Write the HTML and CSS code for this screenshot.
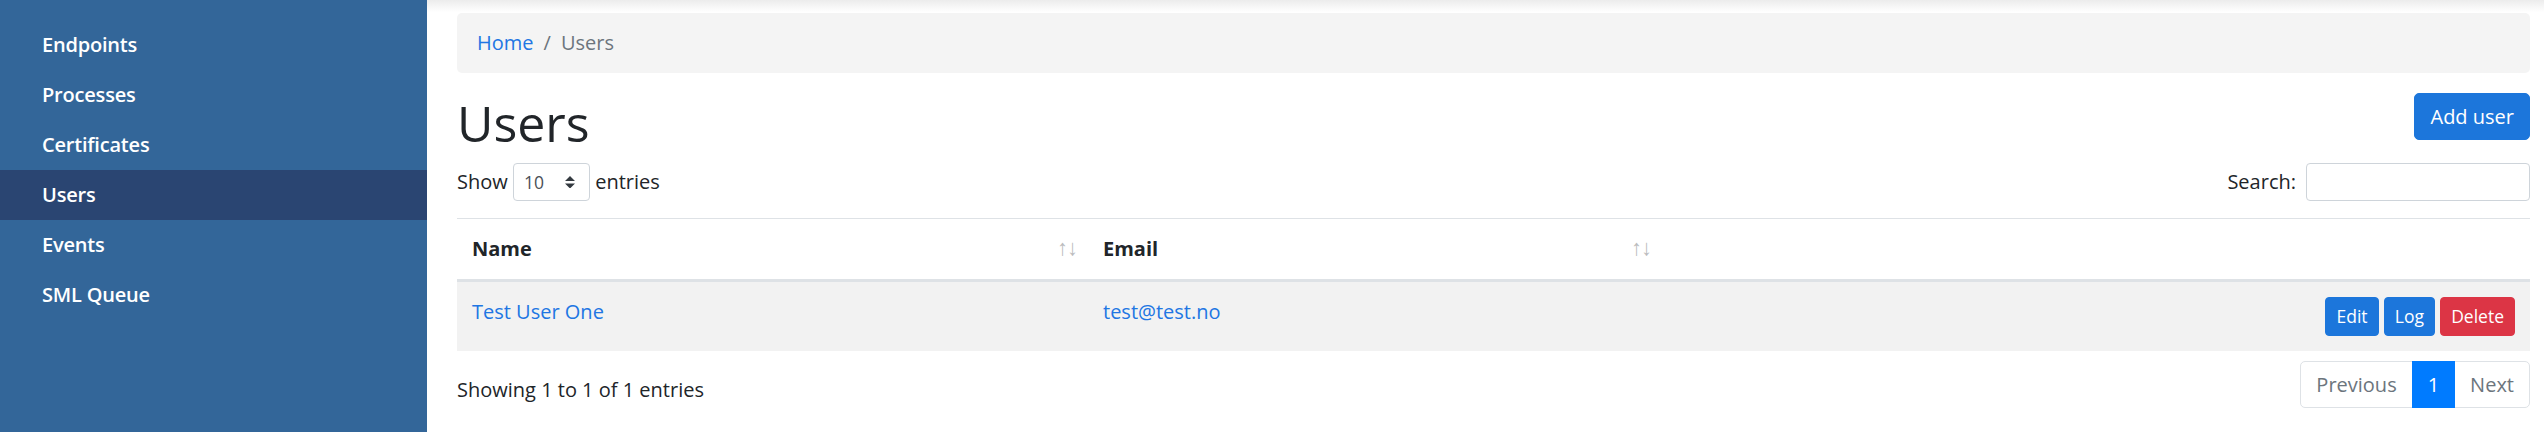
FILE: index.html
```html
<!DOCTYPE html>
<html lang="en">
<head>
<meta charset="utf-8">
<title>Users</title>
<link rel="stylesheet" href="styles.css">
</head>
<body>
<div class="layout">
  <nav class="sidebar">
    <ul class="side-nav">
      <li><a class="side-link" href="#">Endpoints</a></li>
      <li><a class="side-link" href="#">Processes</a></li>
      <li><a class="side-link" href="#">Certificates</a></li>
      <li><a class="side-link active" href="#">Users</a></li>
      <li><a class="side-link" href="#">Events</a></li>
      <li><a class="side-link" href="#">SML Queue</a></li>
    </ul>
  </nav>
  <main class="main">
    <ol class="breadcrumb">
      <li class="crumb"><a href="#">Home</a></li>
      <li class="crumb active">Users</li>
    </ol>
    <div class="page-head">
      <h1 class="title">Users</h1>
      <a class="btn btn-primary" href="#">Add user</a>
    </div>
    <div class="dt-top">
      <div class="dt-length">
        <label class="dt-label">Show <span class="select-wrap"><select class="dt-select"><option>10</option><option>25</option><option>50</option><option>100</option></select><svg class="select-arrows" viewBox="0 0 4 5"><path d="M2 0L0 2h4zm0 5L0 3h4z" fill="#343a40"/></svg></span> entries</label>
      </div>
      <div class="dt-filter">
        <label class="dt-label">Search:<input class="dt-search" type="search"></label>
      </div>
    </div>
    <table class="dt-table">
      <thead>
        <tr>
          <th class="sorting col-name">Name</th>
          <th class="sorting col-email">Email</th>
          <th class="col-actions"></th>
        </tr>
      </thead>
      <tbody>
        <tr class="odd">
          <td><a class="cell-link" href="#">Test User One</a></td>
          <td><a class="cell-link" href="#">test@test.no</a></td>
          <td class="actions"><a class="btn btn-sm btn-primary" href="#">Edit</a> <a class="btn btn-sm btn-primary" href="#">Log</a> <a class="btn btn-sm btn-danger" href="#">Delete</a></td>
        </tr>
      </tbody>
    </table>
    <div class="dt-bottom">
      <div class="dt-info">Showing 1 to 1 of 1 entries</div>
      <ul class="pagination">
        <li class="page-item disabled"><a class="page-link" href="#">Previous</a></li>
        <li class="page-item active"><a class="page-link" href="#">1</a></li>
        <li class="page-item disabled"><a class="page-link" href="#">Next</a></li>
      </ul>
    </div>
  </main>
</div>
</body>
</html>
```
FILE: styles.css
```css
html {
  font-size: 20px;
}
body {
  margin: 0;
  font-family: "Open Sans", "Liberation Sans", sans-serif;
  font-size: 20px;
  line-height: 1.5;
  color: #212529;
  background: #fff;
}
* {
  box-sizing: border-box;
}
.layout {
  display: flex;
  min-height: 100vh;
}
.sidebar {
  flex: none;
  width: 427px;
  background: #336699;
  padding-top: 20px;
}
.side-nav {
  list-style: none;
  margin: 0;
  padding: 0;
}
.side-link {
  display: block;
  padding: 10px 20px 10px 42px;
  line-height: 30px;
  color: #fff;
  font-weight: 600;
  text-decoration: none;
  letter-spacing: -0.2px;
}
.side-link.active {
  background: #2a4572;
}
.main {
  flex: 1;
  min-width: 0;
  padding: 13px 14px 0 30px;
  background: linear-gradient(#ececec, #ffffff 12px) no-repeat;
}
.breadcrumb {
  display: flex;
  list-style: none;
  margin: 0 0 20px;
  padding: 15px 20px;
  line-height: 30px;
  background: #f4f4f4;
  border-radius: 5px;
}
.crumb + .crumb {
  padding-left: 10px;
}
.crumb + .crumb::before {
  content: "/";
  padding-right: 10px;
  color: #6c757d;
}
.crumb a {
  color: #2176e3;
  text-decoration: none;
}
.crumb.active {
  color: #6c757d;
}
.page-head {
  display: flex;
  justify-content: space-between;
  align-items: flex-start;
}
.title {
  margin: 0 0 10px;
  font-size: 50px;
  font-weight: 400;
  line-height: 60px;
}
.btn {
  display: inline-block;
  font-weight: 400;
  text-align: center;
  vertical-align: middle;
  border: 1px solid transparent;
  padding: 7.5px 15px;
  font-size: 20px;
  line-height: 30px;
  border-radius: 5px;
  text-decoration: none;
  color: #fff;
}
.btn-primary {
  background: #1c76db;
  border-color: #1c76db;
}
.btn-danger {
  background: #dc3545;
  border-color: #dc3545;
}
.btn-sm {
  padding: 5px 10px;
  font-size: 17.5px;
  line-height: 26.25px;
  border-radius: 4px;
}
.dt-top {
  display: flex;
  justify-content: space-between;
}
.dt-label {
  display: inline-block;
  margin-bottom: 10px;
  white-space: nowrap;
}
.select-wrap {
  position: relative;
  display: inline-block;
}
.dt-select {
  -webkit-appearance: none;
  appearance: none;
  width: 77px;
  height: 38.25px;
  padding: 5px 35px 5px 10px;
  font-family: inherit;
  font-size: 17.5px;
  line-height: 26.25px;
  color: #495057;
  background: #fff;
  border: 1px solid #ced4da;
  border-radius: 4px;
}
.select-arrows {
  position: absolute;
  right: 15px;
  top: 50%;
  width: 10px;
  height: 12.5px;
  margin-top: -6.25px;
  pointer-events: none;
}
.dt-search {
  width: 224px;
  height: 38.25px;
  margin-left: 10px;
  padding: 5px 10px;
  font-family: inherit;
  font-size: 17.5px;
  color: #495057;
  background: #fff;
  border: 1px solid #ced4da;
  border-radius: 4px;
}
.dt-table {
  width: 100%;
  border-collapse: collapse;
  margin-top: 7px;
  margin-bottom: 7.5px;
}
.dt-table th {
  position: relative;
  padding: 15px 30px 15px 15px;
  text-align: left;
  vertical-align: bottom;
  font-weight: 700;
  line-height: 30px;
  border-top: 1px solid #dee2e6;
  border-bottom: 3px solid #dee2e6;
}
.col-name {
  width: 631px;
}
.col-email {
  width: 574px;
}
.sorting::before,
.sorting::after {
  position: absolute;
  bottom: 18px;
  display: block;
  opacity: 0.3;
  font-weight: 400;
  font-size: 22px;
  line-height: 30px;
}
.sorting::before {
  right: 20px;
  content: "\2191";
}
.sorting::after {
  right: 10px;
  content: "\2193";
}
.dt-table td {
  padding: 15px;
  line-height: 30px;
  vertical-align: top;
  border-top: 1px solid #dee2e6;
}
.odd {
  background: #f2f2f2;
}
.cell-link {
  color: #2176e3;
  text-decoration: none;
}
.actions {
  text-align: right;
}
.dt-bottom {
  display: flex;
  justify-content: space-between;
  align-items: flex-start;
}
.dt-info {
  padding-top: 17px;
  line-height: 30px;
}
.pagination {
  display: flex;
  list-style: none;
  margin: 2.5px 0;
  padding: 0;
}
.page-link {
  position: relative;
  display: block;
  margin-left: -1px;
  padding: 10px 15px;
  line-height: 25px;
  color: #6c757d;
  background: #fff;
  border: 1px solid #dee2e6;
  text-decoration: none;
}
.page-item:first-child .page-link {
  margin-left: 0;
  border-radius: 5px 0 0 5px;
}
.page-item:last-child .page-link {
  border-radius: 0 5px 5px 0;
}
.page-item.active .page-link {
  z-index: 1;
  color: #fff;
  background: #007bff;
  border-color: #007bff;
}
```
